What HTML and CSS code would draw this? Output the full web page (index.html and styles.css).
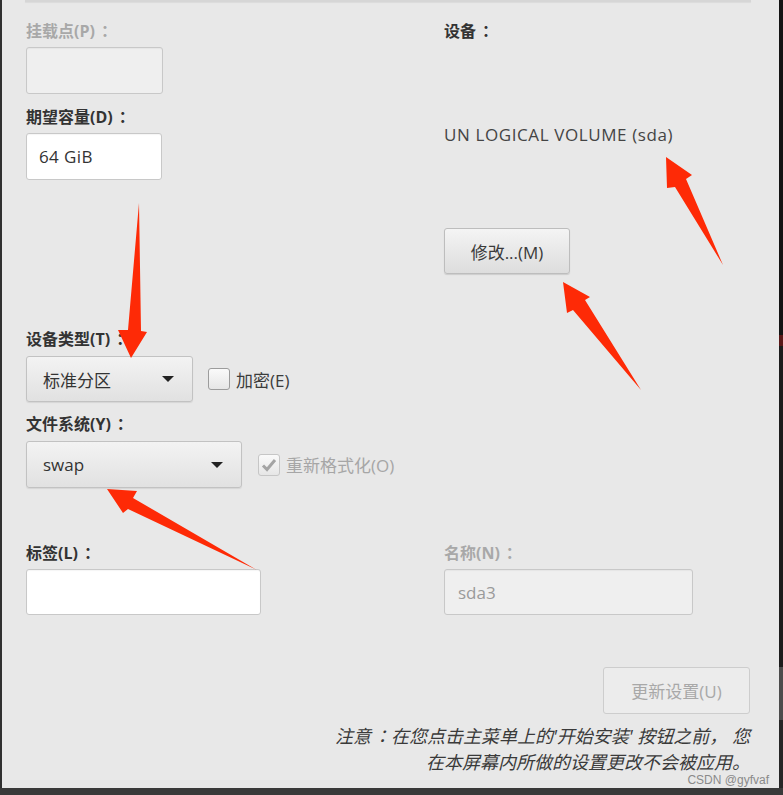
FILE: index.html
```html
<!DOCTYPE html>
<html>
	<head>
		<meta charset="utf-8">
		<title>手动分区</title>
		<link rel="stylesheet" href="styles.css">
	</head>
	<body>
		<div class="screen">
			<div class="main">
				<div class="side"></div>
				<section class="panel">
					<div class="topbar"></div>
					<div class="cols">
						<div class="col">
							<label class="lbl off">挂载点(P)<span class="colon">：</span></label>
							<div class="entry off mount"></div>
							<label class="lbl lbl-size">期望容量(D)<span class="colon">：</span></label>
							<div class="entry size">64 GiB</div>
							<label class="lbl lbl-type">设备类型(T)<span class="colon">：</span></label>
							<div class="row">
								<div class="combo type">标准分区<span class="caret"></span></div>
								<span class="check"></span>
								<span class="check-txt">加密(E)</span>
							</div>
							<label class="lbl lbl-fs">文件系统(Y)<span class="colon">：</span></label>
							<div class="row">
								<div class="combo fs">swap<span class="caret"></span></div>
								<span class="check on">
									<svg width="16" height="14" viewBox="0 0 16 14"><path d="M2 7.5 L6 11.5 L14 2" fill="none" stroke="#a4a4a4" stroke-width="3"/></svg>
								</span>
								<span class="check-txt off">重新格式化(O)</span>
							</div>
						</div>
						<div class="col">
							<label class="lbl">设备<span class="colon">：</span></label>
							<div class="devname">UN LOGICAL VOLUME (sda)</div>
							<button class="btn modify">修改...(M)</button>
						</div>
					</div>
					<div class="cols names">
						<div class="col">
							<label class="lbl">标签(L)<span class="colon">：</span></label>
							<div class="entry tag"></div>
						</div>
						<div class="col">
							<label class="lbl off">名称(N)<span class="colon">：</span></label>
							<div class="entry off name">sda3</div>
						</div>
					</div>
					<div class="foot">
						<button class="btn update">更新设置(U)</button>
						<p class="note">注意<span class="colon">：</span>在您点击主菜单上的'开始安装' 按钮之前，&nbsp;您</p>
						<p class="note">在本屏幕内所做的设置更改不会被应用。</p>
					</div>
					<div class="mark">CSDN @gyfvaf</div>
				</section>
				<div class="edge"></div>
			</div>
			<div class="bottom"></div>
			<!-- 红色标注箭头 -->
			<svg class="arrows" width="783" height="795" viewBox="0 0 783 795">
				<polygon points="139,203 141,331 147,332 131,358 118,330 128,330" />
				<polygon points="666,157 692,175 686,179 723,265 675,187 667,188" />
				<polygon points="563,282 590,297 585,300 641,390 573,310 567,313" />
				<polygon points="107,489 137,491 133,498 257,570 128,509 123,513" />
			</svg>
		</div>
	</body>
</html>
```
FILE: styles.css
```css
body {
	margin: 0;
	background: #2a2a2a;
	font-family: "Open Sans", "Noto Sans CJK SC", sans-serif;
}

.screen {
	width: 783px;
	height: 795px;
	position: relative;
	overflow: hidden;
}

.main {
	display: flex;
	height: 788px;
}

.side {
	width: 2px;
	background: #303030;
}

.edge {
	width: 4px;
	background: linear-gradient(#141414 0, #141414 335px, #5a1818 335px, #5a1818 346px, #1c1c1c 346px, #1c1c1c 667px, #4c4c4c 667px, #4c4c4c 720px, #262626 720px);
}

.bottom {
	height: 7px;
	background: #393939;
}

.panel {
	width: 777px;
	box-sizing: border-box;
	padding: 0 29px 0 24px;
	background: #e8e8e8;
	position: relative;
}

.topbar {
	height: 2px;
	margin: 0 -1px 0 -1px;
	background: #d6d6d6;
	box-shadow: 0 1px 1px rgba(0, 0, 0, .06);
}

.cols {
	display: grid;
	grid-template-columns: 418px 1fr;
	margin-top: 19px;
}

.col {
	display: flex;
	flex-direction: column;
	align-items: flex-start;
}

.lbl {
	display: block;
	font-size: 16px;
	font-weight: bold;
	line-height: 20px;
	color: #333;
}

.lbl.off {
	color: #a8a8a8;
}

/* 冒号居中显示 */
.colon {
	font-family: "Noto Sans CJK TC", sans-serif;
	line-height: 0;
	margin-left: 2px;
}

.lbl-size {
	margin-top: 13px;
}

.lbl-type {
	margin-top: 149px;
}

.lbl-fs {
	margin-top: 12px;
}

/* 输入框 */
.entry {
	box-sizing: border-box;
	height: 47px;
	margin-top: 6px;
	padding-left: 12px;
	background: #fff;
	border: 1px solid #c8c8c8;
	border-radius: 3px;
	box-shadow: inset 0 1px 1px rgba(0, 0, 0, .04);
	font-size: 17px;
	line-height: 45px;
	color: #333;
}

.entry.off {
	background: #efefef;
	color: #9a9a9a;
}

.mount {
	width: 137px;
}

.size {
	width: 136px;
	letter-spacing: .4px;
}

.tag {
	width: 235px;
	height: 46px;
}

.name {
	width: 249px;
	height: 46px;
	padding-left: 13px;
}

.row {
	display: flex;
	align-items: center;
	margin-top: 7px;
}

/* 下拉框 */
.combo {
	box-sizing: border-box;
	height: 46px;
	display: flex;
	align-items: center;
	justify-content: space-between;
	padding: 0 18px 0 16px;
	background: linear-gradient(#f3f3f3, #e1e1e1);
	border: 1px solid #c2c2c2;
	border-radius: 3px;
	box-shadow: 0 1px 1px rgba(0, 0, 0, .08);
	font-size: 17px;
	color: #333;
}

.type {
	width: 167px;
}

.fs {
	width: 216px;
	height: 47px;
}

.caret {
	width: 0;
	height: 0;
	border-left: 6px solid transparent;
	border-right: 6px solid transparent;
	border-top: 6px solid #222;
}

.check {
	box-sizing: border-box;
	width: 22px;
	height: 22px;
	margin-left: 15px;
	display: flex;
	align-items: center;
	justify-content: center;
	background: linear-gradient(#fafafa, #e6e6e6);
	border: 1px solid #9c9c9c;
	border-radius: 3px;
}

.check.on {
	margin-left: 16px;
	border-color: #c6c6c6;
}

.check-txt {
	margin-left: 6px;
	font-size: 17px;
	color: #3c3c3c;
}

.check-txt.off {
	color: #a6a6a6;
}

.devname {
	margin-top: 84px;
	font-size: 17px;
	letter-spacing: .6px;
	line-height: 20px;
	color: #444;
}

/* 按钮 */
.btn {
	box-sizing: border-box;
	height: 46px;
	padding: 0;
	font-family: inherit;
	font-size: 17px;
	color: #3a3a3a;
	background: linear-gradient(#f4f4f4, #dddddd);
	border: 1px solid #bdbdbd;
	border-radius: 3px;
	box-shadow: 0 1px 1px rgba(0, 0, 0, .12);
}

.modify {
	width: 126px;
	margin-top: 83px;
}

.names {
	margin-top: 55px;
}

.foot {
	display: flex;
	flex-direction: column;
	align-items: flex-end;
}

.update {
	width: 147px;
	height: 47px;
	margin-top: 52px;
	background: #ececec;
	border-color: #cdcdcd;
	box-shadow: none;
	color: #a8a8a8;
}

.note {
	margin: 6px 0 0;
	font-size: 18px;
	font-style: italic;
	line-height: 20px;
	text-align: right;
	color: #3a3a3a;
}

.update + .note {
	margin-top: 12px;
}

.mark {
	position: absolute;
	right: 10px;
	bottom: 2px;
	font-family: "Liberation Sans", sans-serif;
	font-size: 12px;
	line-height: 12px;
	color: #8a8a8a;
}

.arrows {
	position: absolute;
	top: 0;
	left: 0;
	fill: #fe2a06;
}
```
